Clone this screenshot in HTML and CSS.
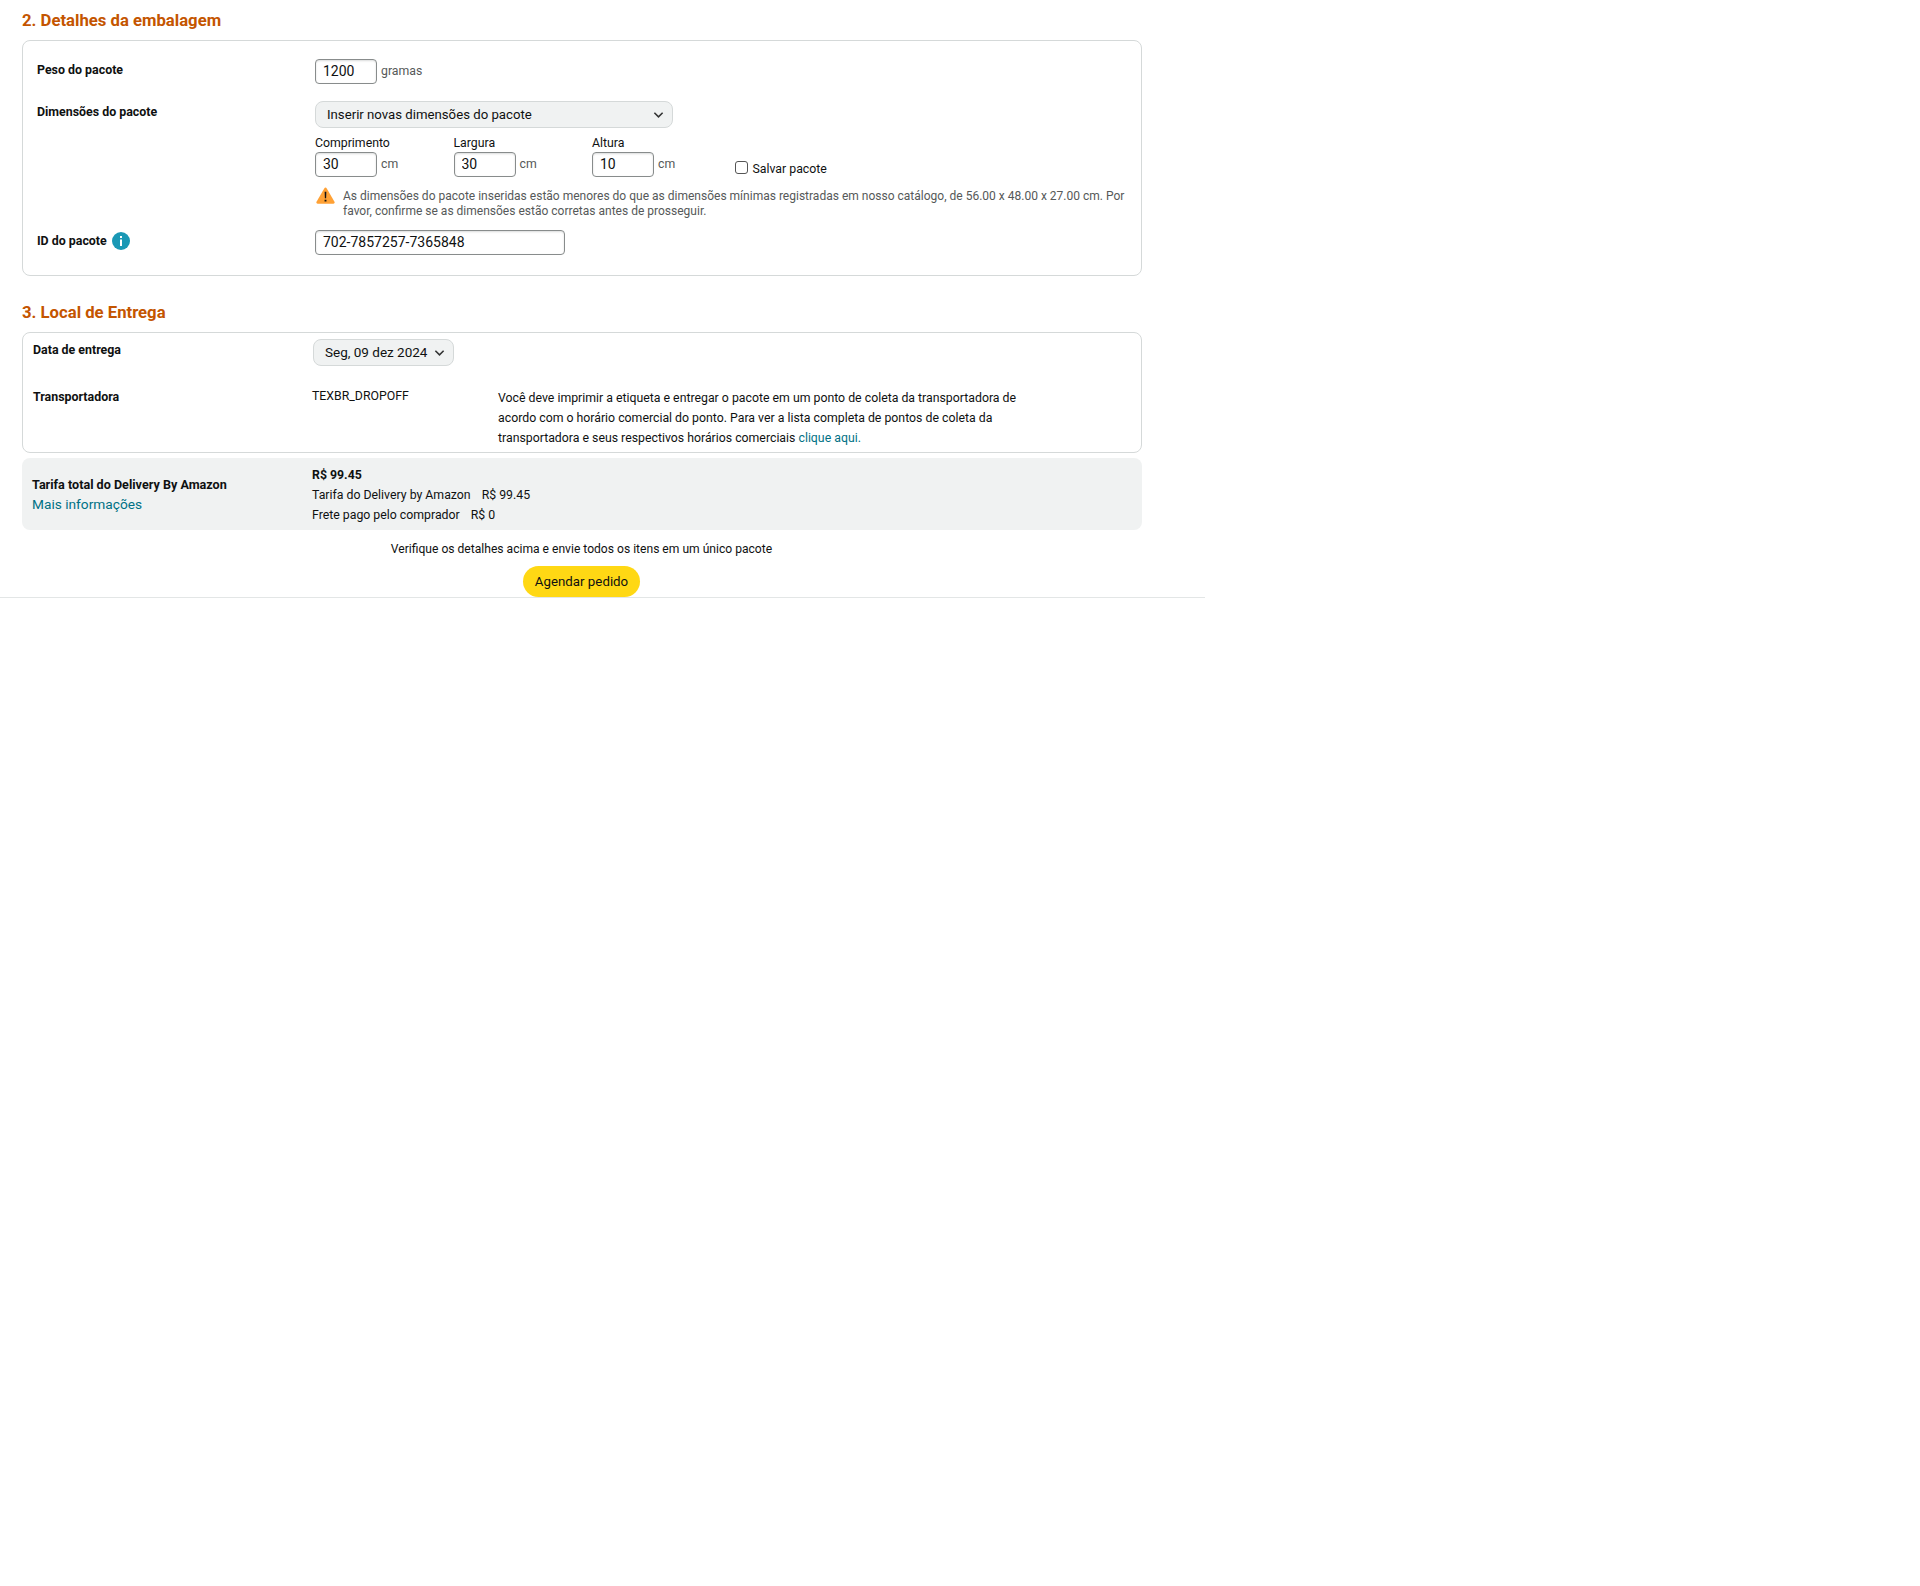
FILE: index.html
```html
<!DOCTYPE html>
<html lang="pt-BR">
<head>
<meta charset="utf-8">
<title>Detalhes da embalagem</title>
<link rel="stylesheet" href="styles.css">
</head>
<body>
<main class="page">
  <h2 class="section-title first">2. Detalhes da embalagem</h2>
  <section class="card package">
    <div class="row weight-row">
      <div class="label">Peso do pacote</div>
      <div class="inline"><input class="input small" value="1200"><span class="unit">gramas</span></div>
    </div>
    <div class="row dim-row">
      <div class="label">Dimensões do pacote</div>
      <div class="dim-body">
        <div class="select wide"><span>Inserir novas dimensões do pacote</span>
          <svg class="chevron" viewBox="0 0 12 8"><path d="M1.5 1.5 6 6l4.5-4.5"/></svg>
        </div>
        <div class="dims">
          <div class="field"><div class="field-label">Comprimento</div><div class="inline"><input class="input small" value="30"><span class="unit">cm</span></div></div>
          <div class="field"><div class="field-label">Largura</div><div class="inline"><input class="input small" value="30"><span class="unit">cm</span></div></div>
          <div class="field"><div class="field-label">Altura</div><div class="inline"><input class="input small" value="10"><span class="unit">cm</span></div></div>
          <label class="save"><span class="check"></span>Salvar pacote</label>
        </div>
        <div class="alert">
          <svg class="warn" viewBox="0 0 18 16"><path class="warn-bg" d="M9 .5c.5 0 .9.3 1.2.8l7.3 12.6c.5.9-.1 1.9-1.1 1.9H1.6c-1 0-1.6-1-1.1-1.9L7.8 1.3C8.1.8 8.5.5 9 .5z"/><path class="warn-mark" d="M8.2 4.5h1.6l-.2 6.2H8.4zM8.1 12h1.8v1.8H8.1z"/></svg>
          <p>As dimensões do pacote inseridas estão menores do que as dimensões mínimas registradas em nosso catálogo, de 56.00 x 48.00 x 27.00 cm. Por favor, confirme se as dimensões estão corretas antes de prosseguir.</p>
        </div>
      </div>
    </div>
    <div class="row id-row">
      <div class="label id-label">ID do pacote
        <svg class="info" viewBox="0 0 18 18"><circle class="info-bg" cx="9" cy="9" r="9"/><path class="info-mark" d="M8 4h2v2H8zM8 7.5h2V14H8z"/></svg>
      </div>
      <input class="input id-input" value="702-7857257-7365848">
    </div>
  </section>

  <h2 class="section-title second">3. Local de Entrega</h2>
  <section class="card delivery">
    <div class="delivery-row date-row">
      <div class="label">Data de entrega</div>
      <div class="select date"><span>Seg, 09 dez 2024</span>
        <svg class="chevron" viewBox="0 0 12 8"><path d="M1.5 1.5 6 6l4.5-4.5"/></svg>
      </div>
    </div>
    <div class="delivery-row carrier-row">
      <div class="label">Transportadora</div>
      <div class="carrier">TEXBR_DROPOFF</div>
      <p class="carrier-note">Você deve imprimir a etiqueta e entregar o pacote em um ponto de coleta da transportadora de acordo com o horário comercial do ponto. Para ver a lista completa de pontos de coleta da transportadora e seus respectivos horários comerciais <a href="#">clique aqui.</a></p>
    </div>
  </section>
  <section class="fees">
    <div class="fee-title">
      <div class="label">Tarifa total do Delivery By Amazon</div>
      <a class="more" href="#">Mais informações</a>
    </div>
    <div class="fee-lines">
      <div class="fee-total">R$ 99.45</div>
      <div class="fee-line"><span>Tarifa do Delivery by Amazon</span><span>R$ 99.45</span></div>
      <div class="fee-line"><span>Frete pago pelo comprador</span><span>R$ 0</span></div>
    </div>
  </section>
  <div class="submit">
    <p>Verifique os detalhes acima e envie todos os itens em um único pacote</p>
    <button class="primary" type="button">Agendar pedido</button>
  </div>
</main>
</body>
</html>
```
FILE: styles.css
```css
* { box-sizing: border-box; }
html, body { margin: 0; padding: 0; background: #fff; }
body {
  font-family: Roboto, "Liberation Sans", sans-serif;
  font-size: 12.3px;
  line-height: 15px;
  color: #0f1111;
}
.page {
  width: 1205px;
  height: 598px;
  padding: 0 63px 0 22px;
  border-bottom: 1px solid #e3e6e6;
}
.section-title {
  margin: 0;
  font-size: 16.7px;
  line-height: 20px;
  font-weight: 700;
  color: #c45500;
}
.section-title.first { padding-top: 11px; }
.section-title.second { margin-top: 27px; }
.card {
  border: 1px solid #d5d9d9;
  border-radius: 8px;
  background: #fff;
}
.package { margin-top: 9px; height: 236px; padding: 18px 14px 0; }
.delivery { margin-top: 9px; height: 121px; padding: 6px 10px 0; }
.row { display: grid; grid-template-columns: 278px 1fr; }
.label { font-weight: 700; font-size: 12.4px; line-height: 15px; }
.weight-row .label { padding-top: 3px; }
.inline { display: flex; align-items: center; }
.input {
  height: 25px;
  padding: 0 7px 1px;
  border: 1px solid #888c8c;
  border-radius: 4px;
  background: #fff;
  font: 14px/21px Roboto, "Liberation Sans", sans-serif;
  color: #0f1111;
  box-shadow: inset 0 1px 2px rgba(15,17,17,.15);
}
.input.small { width: 62px; }
.unit { margin-left: 4px; color: #565959; }
.dim-row { margin-top: 17px; }
.dim-row .label { padding-top: 3px; }
.select {
  display: flex;
  align-items: center;
  justify-content: space-between;
  height: 27px;
  border: 1px solid #d5d9d9;
  border-radius: 8px;
  background: #f0f2f2;
  font-size: 13.2px;
  color: #0f1111;
}
.select.wide { width: 358px; padding: 0 8px 0 11px; }
.select.date { width: 141px; padding: 0 8px 0 11px; margin-left: 1px; font-size: 13.5px; }
.chevron { width: 11px; height: 8px; flex: none; }
.chevron path { fill: none; stroke: #333; stroke-width: 1.7; }
.dims { display: flex; align-items: flex-start; margin-top: 8px; }
.field { width: 138.5px; }
.field-label { line-height: 15px; margin-bottom: 1px; }
.save { display: flex; align-items: center; margin: 26px 0 0 4px; }
.check {
  width: 13px;
  height: 13px;
  margin-right: 5px;
  border: 1px solid #555;
  border-radius: 3px;
  background: #fff;
  position: relative;
  top: -2px;
}
.alert { display: flex; margin-top: 12px; color: #565959; }
.alert p { margin: 0; width: 790px; font-size: 12.03px; }
.warn { width: 19px; height: 17px; margin: -2px 8px 0 1px; flex: none; }
.warn-bg { fill: #ffa135; }
.warn-mark { fill: #111; }
.id-row { margin-top: 11px; }
.id-label { display: flex; align-items: center; gap: 5px; height: 21px; }
.info { width: 18px; height: 18px; }
.info-bg { fill: #1a98b5; }
.info-mark { fill: #fff; }
.id-input { width: 250px; }
.delivery-row { display: grid; }
.date-row { grid-template-columns: 279px 142px; height: 50px; }
.date-row .label { padding-top: 3px; }
.carrier-row { grid-template-columns: 279px 186px 1fr; }
.carrier-note { margin: -1px 0 0; width: 530px; line-height: 20px; }
a { color: #007185; text-decoration: none; }
.fees {
  display: grid;
  grid-template-columns: 280px 1fr;
  margin-top: 5px;
  height: 72px;
  padding: 7px 10px;
  border-radius: 8px;
  background: #f0f2f2;
}
.fee-title { align-self: center; }
.fee-title .label { font-size: 12.6px; }
.more { display: block; margin-top: 2px; font-size: 13.7px; line-height: 20px; }
.fee-lines { line-height: 20px; }
.fee-total { font-weight: 700; }
.fee-line { display: flex; gap: 11px; }
.submit { display: flex; flex-direction: column; align-items: center; margin-right: 1px; }
.submit p { margin: 12px 0 9px; font-size: 12.1px; }
.primary {
  width: 117px;
  height: 31px;
  padding: 0;
  border: 0;
  border-radius: 16px;
  background: #ffd814;
  font: 13.3px/31px Roboto, "Liberation Sans", sans-serif;
  color: #0f1111;
}
```
